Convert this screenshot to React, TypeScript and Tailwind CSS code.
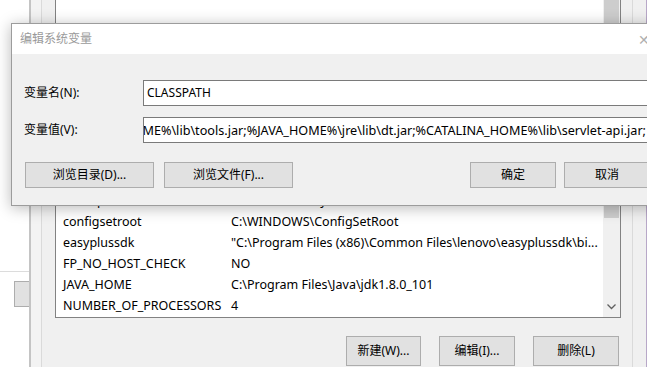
import React from 'react';

const rows: [string, string][] = [
  ['ComSpec', 'C:\\WINDOWS\\system32\\cmd.exe'],
  ['configsetroot', 'C:\\WINDOWS\\ConfigSetRoot'],
  ['easyplussdk', '"C:\\Program Files (x86)\\Common Files\\lenovo\\easyplussdk\\bi...'],
  ['FP_NO_HOST_CHECK', 'NO'],
  ['JAVA_HOME', 'C:\\Program Files\\Java\\jdk1.8.0_101'],
  ['NUMBER_OF_PROCESSORS', '4'],
];

const classpath =
  '.;%JAVA_HOME%\\lib;%JAVA_HOME%\\lib\\tools.jar;%JAVA_HOME%\\jre\\lib\\dt.jar;%CATALINA_HOME%\\lib\\servlet-api.jar;';

function WinButton({ label, className }: { label: string; className: string }) {
  return (
    <div
      className={`h-full flex items-center justify-center bg-[#e1e1e1] border border-[#adadad] text-[12px] text-black ${className}`}
    >
      {label}
    </div>
  );
}

export default function App() {
  return (
    <div
      className="relative w-[647px] h-[367px] overflow-hidden bg-[#f0f0f0] text-black"
      style={{ fontFamily: '"Noto Sans", "Noto Sans CJK SC", sans-serif' }}
    >
      {/* environment variables window behind */}
      <div className="flex h-full">
        <div className="w-[29px] flex flex-col bg-white">
          <div className="h-[272px] border-b border-[#dcdcdc]" />
          <div className="flex-1 pt-[9px] pl-[14px]">
            <div className="h-[26px] border border-r-0 border-[#adadad] bg-[#e1e1e1]" />
          </div>
        </div>
        <div className="w-[13px] border-l-2 border-[#c4c4c4] border-r border-r-[#dadada] bg-[#f3f3f3]" />
        <div className="w-[13px] bg-[#f0f0f0]" />

        <div className="w-[566px] flex flex-col">
          <div className="h-[318px] flex border-l border-r border-b border-[#828282] bg-white">
            <div className="flex-1 flex flex-col justify-end text-[12.5px]">
              {rows.map(([name, value]) => (
                <div key={name} className="h-[21px] flex items-center whitespace-nowrap">
                  <span className="w-[175px] pl-[7px]">{name}</span>
                  <span>{value}</span>
                </div>
              ))}
            </div>
            <div className="w-[17px] bg-[#f0f0f0] flex flex-col justify-between">
              <div className="h-[218px] mx-[1px] bg-[#cdcdcd]" />
              <div className="h-[20px] flex items-center justify-center">
                <svg width="9" height="6" viewBox="0 0 9 6">
                  <path d="M0.5 0.5 L4.5 4.5 L8.5 0.5" fill="none" stroke="#606060" strokeWidth="1.3" />
                </svg>
              </div>
            </div>
          </div>
          <div className="flex mt-[18px] h-[30px] pl-[291px] gap-[19px]">
            <WinButton label="新建(W)..." className="w-[75px]" />
            <WinButton label="编辑(I)..." className="w-[76px] -ml-[1px]" />
            <WinButton label="删除(L)" className="w-[86px] -ml-[1px]" />
          </div>
        </div>

        <div className="w-[12px] bg-[#f0f0f0] border-r border-[#dadada]" />
        <div className="flex-1 bg-[#f0f0f0] border-r border-[#b8a8c8]" />
      </div>

      {/* edit system variable dialog on top */}
      <div className="absolute left-[11px] top-[23px] w-[700px] h-[183px] border border-[#9c9c9c] bg-[#f0f0f0] shadow-[0_2px_14px_rgba(0,0,0,0.28)] flex flex-col">
        <div className="h-[30px] bg-white flex items-center pl-[8px] pr-[60px] text-[12px] text-[#9a9a9a]">
          <span className="flex-1">编辑系统变量</span>
          <span className="text-[#b0b0b0] text-[14px] font-light">✕</span>
        </div>
        <div className="flex-1 flex flex-col pt-[26px] pl-[12px]">
          <div className="flex h-[26px] items-center">
            <span className="w-[119px] text-[12px]">变量名(N):</span>
            <div className="flex-1 h-full bg-white border border-[#7a7a7a] flex items-center pl-[3px] text-[12px]">
              CLASSPATH
            </div>
          </div>
          <div className="flex h-[26px] items-center mt-[11px]">
            <span className="w-[119px] text-[12px]">变量值(V):</span>
            <div className="flex-1 h-full bg-white border border-[#7a7a7a] flex items-center">
              <div className="w-[502px] overflow-hidden flex justify-end text-[12.65px] whitespace-nowrap">
                <span>{classpath}</span>
              </div>
            </div>
          </div>
          <div className="flex h-[26px] mt-[19px] pl-[1px]">
            <WinButton label="浏览目录(D)..." className="w-[129px]" />
            <WinButton label="浏览文件(F)..." className="w-[129px] ml-[10px]" />
            <WinButton label="确定" className="w-[86px] ml-[177px]" />
            <WinButton label="取消" className="w-[86px] ml-[8px]" />
          </div>
        </div>
      </div>
    </div>
  );
}
